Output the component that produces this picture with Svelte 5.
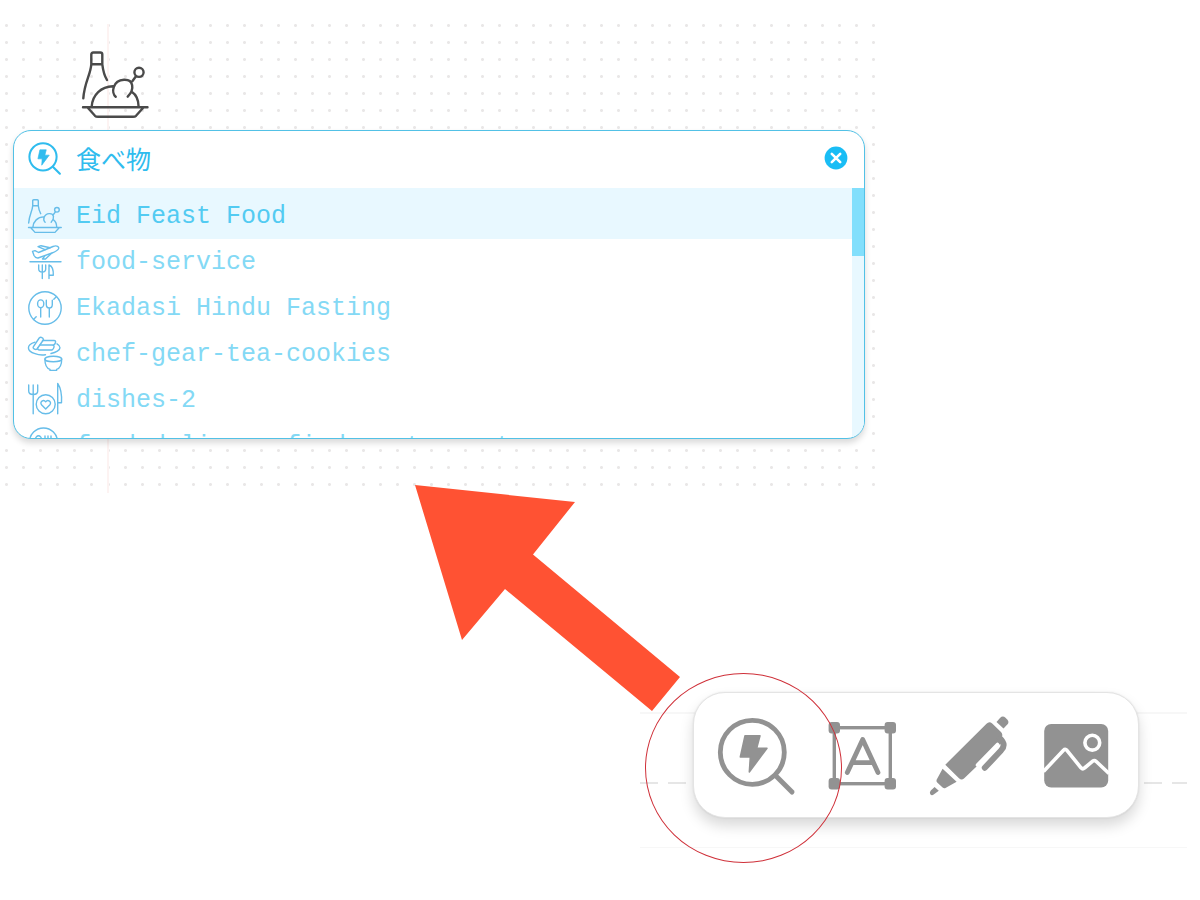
<script>
  let query = $state('食べ物');
  let selected = $state(0);
  const results = [
    { icon: 'feast', name: 'Eid Feast Food' },
    { icon: 'flight', name: 'food-service' },
    { icon: 'fasting', name: 'Ekadasi Hindu Fasting' },
    { icon: 'cookies', name: 'chef-gear-tea-cookies' },
    { icon: 'dishes', name: 'dishes-2' },
    { icon: 'delivery', name: 'food-delivery-find-restaurant' }
  ];
</script>

{#snippet feast(width)}
  <svg viewBox="0 0 67 67" class="line" stroke-width={width} aria-hidden="true">
    <path d="M9.3 13.3V3.5Q9.3 1.5 11.3 1.5H18.3Q20.3 1.5 20.3 3.5V13.3ZM9.3 13.3C8.5 24 2.5 31 1.3 47.3M20.3 13.3C21 19 22 24 25 29" />
    <path d="M9.7 55.5C10.5 44 19 35.5 31 35.2M33.7 45.7C29 42 30.5 29.5 42 28.8C51.5 28.3 53 38 45.7 45.7M49.7 40.7C54 43.5 56.5 48 56.6 55.5M50.5 30L54 25.3" />
    <circle cx="57" cy="21.3" r="4.6" />
    <path d="M1 56.3H65.5M6 57L13 64.8Q14 65.8 16 65.8H51Q53 65.8 54 64.8L61 57" />
  </svg>
{/snippet}

{#snippet finder()}
  <svg viewBox="0 0 80 80" aria-hidden="true">
    <circle cx="35.3" cy="37.3" r="32" fill="none" stroke="currentColor" stroke-width="4.8" />
    <path d="M59 61L75 77" fill="none" stroke="currentColor" stroke-width="5" stroke-linecap="round" />
    <path d="M28 20.7H43L39.7 33.3H50L32.3 57L33.3 42H23.3Z" fill="currentColor" stroke="currentColor" stroke-width="1.5" stroke-linejoin="round" />
  </svg>
{/snippet}

{#snippet resultIcon(kind)}
  {#if kind === 'feast'}
    {@render feast(2.8)}
  {:else}
    <svg viewBox="0 0 34 34" class="line" stroke-width="1.4" aria-hidden="true">
      {#if kind === 'flight'}
        <path d="M4.5 6.3L7 5.6L10.5 7.5L25 1.5C29 0 31.5 1.8 30.4 4C29.5 5.7 27 6.8 24 8L10 13Q7.5 13.3 6 10.5Z" />
        <path d="M17 4.7L10 1.7L13 .7L22 2.8M23.5 8.3L17.5 14H14.5L17 10.7" />
        <path d="M2 16.8H33M10.7 20V24Q10.7 27 14.3 27Q17.7 27 17.7 24V20M14.3 20V33.5M21 33.5V20C24 21 25.5 25 25.3 30.2H21" />
      {:else if kind === 'fasting'}
        <circle cx="17" cy="17" r="16.2" />
        <ellipse cx="12.7" cy="12.8" rx="3.1" ry="3.9" />
        <path d="M12.7 16.7V26M18.3 9.3V13.5Q18.3 17 21.3 17Q24.3 17 24.3 13.5V9.3M21.3 17V26M25.8 8.2L28.5 5.5M8.2 25.8L5.5 28.5" />
      {:else if kind === 'cookies'}
        <path d="M7 5.2C-2 8-1.5 14 7 16.7C10.5 18 14 18.2 17.5 17.7M23 16.5C28 15.5 32 13 32 10.7C32 9.3 31 8 29 6.8" />
        <path d="M5.3 9.8L11.2 1Q12.5-.3 14 .7L15 1.4Q16 2.3 15 3.5L9 12Q8 13 6.5 12.2L5.7 11.5Q4.7 10.8 5.3 9.8Z" />
        <path d="M14.5 3.5H26Q28 3.5 27.5 5.5T25.5 8H12M12 8H24Q26.5 8 26 10.2T24 13H11.5Q9.5 13 9.6 11" />
        <ellipse cx="25.3" cy="22" rx="8.4" ry="2.8" />
        <path d="M16.9 22C16.9 28 19 31.4 22 32.4V33.4H28.6V32.4C31.6 31.4 33.7 28 33.7 22" />
      {:else if kind === 'dishes'}
        <path d="M.7 2V8Q.7 11.5 5.2 11.5Q9.7 11.5 9.7 8V2M5.2 2V30.8M29.7 30.8V.5C32.8 5 34 11 33.5 19.8H29.7" />
        <circle cx="17.7" cy="21.3" r="9.5" />
        <path d="M17.7 26L13.5 21.7C11.3 19 15.5 15.8 17.7 18.8C19.9 15.8 24.1 19 21.9 21.7Z" />
      {:else}
        <circle cx="15.5" cy="13" r="14" />
        <ellipse cx="10.5" cy="10.5" rx="3" ry="3.8" />
        <path d="M10.5 14.3V22M17 7V11Q17 14 20 14Q23 14 23 11V7M20 7V22" />
      {/if}
    </svg>
  {/if}
{/snippet}

<main>
  <section class="board">
    <div class="placed">{@render feast(2.4)}</div>
    <div class="panel">
      <div class="search">
        <label for="query" aria-label="Search icons">{@render finder()}</label>
        <input id="query" type="text" bind:value={query} />
        <button class="clear" aria-label="Clear" onclick={() => (query = '')}>
          <svg viewBox="0 0 24 24" aria-hidden="true">
            <circle cx="12" cy="12" r="11.4" fill="#19bdf5" />
            <path d="M7.8 7.8L16.2 16.2M16.2 7.8L7.8 16.2" stroke="#fff" stroke-width="2.6" stroke-linecap="round" />
          </svg>
        </button>
      </div>
      <div class="results">
        <ul>
          {#each results as item, i}
            <li>
              <button class:active={selected === i} onclick={() => (selected = i)}>
                {@render resultIcon(item.icon)}
                <span>{item.name}</span>
              </button>
            </li>
          {/each}
        </ul>
        <div class="track"><div class="thumb"></div></div>
      </div>
    </div>
  </section>

  <section class="sheet">
    <div class="rules"></div>
    <div class="toolbar" role="toolbar" aria-label="Tools">
      <button aria-label="Find icon">{@render finder()}</button>
      <button aria-label="Text">
        <svg viewBox="0 0 80 80" aria-hidden="true">
          <rect x="11.3" y="12.7" width="56" height="56" fill="none" stroke="currentColor" stroke-width="3.4" />
          <g fill="currentColor">
            <rect x="5.6" y="7" width="11.4" height="11.4" rx="3" />
            <rect x="61.6" y="7" width="11.4" height="11.4" rx="3" />
            <rect x="5.6" y="63" width="11.4" height="11.4" rx="3" />
            <rect x="61.6" y="63" width="11.4" height="11.4" rx="3" />
          </g>
          <path d="M24.3 57.5L39.7 24.5L55 57.5M29 47.7H50" fill="none" stroke="currentColor" stroke-width="4.8" stroke-linecap="round" stroke-linejoin="round" />
        </svg>
      </button>
      <button aria-label="Pen">
        <svg viewBox="0 0 80 80" aria-hidden="true">
          <g fill="currentColor">
            <path d="M67.5 7L71 2.9Q73.7.2 76.5 2.7L78.2 4.4Q80.6 7 78.3 9.6L74.5 13.4Z" />
            <path d="M16.3 49.7L57.5 8.7Q60.3 5.7 63.2 8.5L72 17Q74 19 73 21.5V27L70 30L35 63.5Q32.5 65.5 30 63.2Z" />
            <path d="M13.6 53.8L27.6 66.7L16.5 72.9Q15 73.7 13.6 72.4L8.2 67.5Q7 66.3 7.6 64.8Z" />
            <path d="M5.6 72L9.8 75.8L4.7 79.6Q2.5 81 1.2 79Q.3 77.3 1.8 75.6Z" />
          </g>
          <path d="M68.5 29.5L48.5 50" stroke="#fff" stroke-width="3.6" stroke-linecap="round" />
          <path d="M71 23.5C75.8 28 75.5 32 72 35.5L55.8 52.8" fill="none" stroke="currentColor" stroke-width="6" stroke-linecap="round" />
        </svg>
      </button>
      <button aria-label="Image">
        <svg viewBox="0 0 80 80" aria-hidden="true">
          <rect x="9.2" y="9" width="64" height="63.6" rx="7" fill="currentColor" />
          <g fill="none" stroke="#fff" stroke-width="3.6" stroke-linejoin="round">
            <circle cx="57.3" cy="27.7" r="7.4" />
            <path d="M8.5 56.5L28.5 35.2Q30.2 33.5 31.9 35.3L46 52.8Q47.7 54.6 49.5 53L57.7 46.2Q59.4 44.8 61 46.3L74 58.5" />
          </g>
        </svg>
      </button>
    </div>
    <div class="ring"></div>
  </section>

  <svg class="arrow" viewBox="0 0 265 226" aria-hidden="true">
    <path d="M0 0L160 17L118 69.5L265 192L237 226L90 104L47 155Z" fill="#ff5233" />
  </svg>
</main>

<style>
  :global(body) {
    background: #fff;
  }
  * {
    box-sizing: border-box;
  }
  main {
    position: relative;
    padding-top: 16px;
    overflow: hidden;
  }
  button {
    border: 0;
    padding: 0;
    background: none;
    color: inherit;
    font: inherit;
    cursor: pointer;
  }
  svg {
    display: block;
    flex: none;
    overflow: visible;
  }
  .line {
    fill: none;
    stroke: currentColor;
    stroke-linecap: round;
    stroke-linejoin: round;
  }
  .board {
    width: 73%;
    padding: 35px 11px 54px 13px;
    background:
      linear-gradient(#fdf3f2, #fdf3f2) 107px 8px / 2px 100% no-repeat,
      radial-gradient(circle at center, #e9e7e7 1px, transparent 2px) -2px 1px / 17px 17px;
  }
  .placed {
    width: 67px;
    margin: 0 0 12px 69px;
    color: #4a4a4a;
  }
  .panel {
    overflow: hidden;
    border: 1px solid #52c1e6;
    border-radius: 18px;
    background: #fff;
    box-shadow: 0 4px 6px #00000026;
  }
  .search {
    display: flex;
    align-items: center;
    gap: 14px;
    height: 57px;
    padding: 0 16px 3px 14px;
    color: #2fbcee;
  }
  .search label svg,
  li svg {
    width: 34px;
    height: 34px;
  }
  input {
    flex: 1;
    min-width: 0;
    border: 0;
    padding: 0;
    outline: 0;
    background: none;
    color: inherit;
    font: 25px/36px "Noto Sans CJK JP", sans-serif;
  }
  .clear {
    width: 24px;
    height: 24px;
  }
  .results {
    display: flex;
    height: 250px;
    overflow: hidden;
  }
  ul {
    flex: 1;
    min-width: 0;
    margin: 0;
    padding: 0;
    list-style: none;
  }
  li button {
    display: flex;
    align-items: center;
    gap: 14px;
    width: 100%;
    height: 46px;
    padding: 0 14px;
    color: #84d9f5;
    font: 25px/32px "Liberation Mono", monospace;
    white-space: nowrap;
  }
  li:first-child button {
    height: 51px;
    padding-top: 5px;
  }
  li button.active {
    background: #e8f8ff;
    color: #52cbf2;
  }
  li span {
    padding-top: 2px;
  }
  li svg {
    color: #67bde9;
  }
  .track {
    width: 12px;
    background: #e8f8ff;
  }
  .thumb {
    height: 68px;
    background: #82dffc;
  }
  .sheet {
    position: relative;
    width: fit-content;
    margin: 199px 13px 0 auto;
    padding: 0 48px 82px 53px;
  }
  .rules {
    position: absolute;
    inset: 20px 0 auto;
    height: 136px;
    border: solid #f7f7f7;
    border-width: 2px 0 1px;
    background: repeating-linear-gradient(90deg, #e6e6e6 0 18px, transparent 18px 28px) 0 68px / 100% 2px no-repeat;
  }
  .toolbar {
    position: relative;
    display: flex;
    gap: 26px;
    padding: 22px 23px;
    border: 1px solid #e4e4e4;
    border-radius: 32px;
    background: #fff;
    box-shadow: 0 0 2px #00000018, 0 8px 14px #00000026;
    color: #929292;
  }
  .toolbar svg {
    width: 80px;
    height: 80px;
  }
  .ring {
    position: absolute;
    left: 5px;
    top: -19px;
    width: 197px;
    height: 190px;
    border: 1px solid #cf3039;
    border-radius: 50%;
    pointer-events: none;
  }
  .arrow {
    position: absolute;
    left: 415px;
    top: 485px;
    width: 265px;
    height: 226px;
    pointer-events: none;
  }
</style>
